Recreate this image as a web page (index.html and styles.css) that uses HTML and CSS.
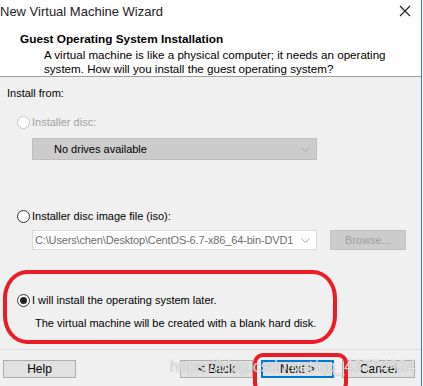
FILE: index.html
```html
<!DOCTYPE html>
<html lang="en">
<head>
    <meta charset="UTF-8">
    <title>New Virtual Machine Wizard</title>
    <link rel="stylesheet" href="styles.css">
</head>
<body>
    <div class="window">
        <!-- Title bar -->
        <div class="titlebar">
            <span class="title">New Virtual Machine Wizard</span>
            <svg class="close" width="12" height="12" viewBox="0 0 12 12">
                <path d="M1 1 L11 11 M11 1 L1 11" stroke="#222" stroke-width="1.1" fill="none"/>
            </svg>
        </div>

        <!-- Header -->
        <div class="header">
            <h2>Guest Operating System Installation</h2>
            <p>A virtual machine is like a physical computer; it needs an operating<br>system. How will you install the guest operating system?</p>
        </div>

        <!-- Options -->
        <div class="content">
            <div class="label">Install from:</div>

            <div class="option disabled opt-disc">
                <span class="radio"></span>
                <span>Installer disc:</span>
            </div>
            <div class="combo combo-disabled">
                <span class="combo-text">No drives available</span>
                <svg class="chevron" width="9" height="5" viewBox="0 0 9 5"><path d="M0.5 0.5 L4.5 4.5 L8.5 0.5" stroke="#a8a8a8" fill="none"/></svg>
            </div>

            <div class="option opt-iso">
                <span class="radio"></span>
                <span>Installer disc image file (iso):</span>
            </div>
            <div class="iso-row">
                <div class="combo combo-iso">
                    <span class="combo-text">C:\Users\chen\Desktop\CentOS-6.7-x86_64-bin-DVD1</span>
                    <svg class="chevron" width="9" height="5" viewBox="0 0 9 5"><path d="M0.5 0.5 L4.5 4.5 L8.5 0.5" stroke="#a8a8a8" fill="none"/></svg>
                </div>
                <div class="browse">Browse...</div>
            </div>

            <div class="option opt-later">
                <span class="radio checked"></span>
                <span>I will install the operating system later.</span>
            </div>
            <div class="note">The virtual machine will be created with a blank hard disk.</div>
        </div>

        <!-- Buttons -->
        <div class="footer">
            <div class="btn">Help</div>
            <div class="btn-group">
                <div class="btn">&lt; Back</div>
                <div class="btn btn-default">Next &gt;</div>
                <div class="btn">Cancel</div>
            </div>
        </div>
    </div>

    <!-- Screenshot annotations -->
    <div class="mark mark-option"></div>
    <div class="mark mark-next"></div>
    <div class="watermark">https://blog.csdn.net/qq_43774924</div>
</body>
</html>
```

FILE: styles.css
```css
/* General Styles */
body {
    margin: 0;
    width: 423px;
    height: 386px;
    overflow: hidden;
    position: relative;
    background: #ffffff;
    font-family: "Liberation Sans", Arial, sans-serif;
    font-size: 11px;
    color: #000;
}

.window {
    width: 421px;
    height: 386px;
    border-right: 1px solid #1c7fd8;
    background: #f0f0f0;
}

/* Title bar */
.titlebar {
    height: 24px;
    background: #ffffff;
    display: flex;
    align-items: center;
    justify-content: space-between;
}

.title {
    font-size: 13px;
    color: #222;
    margin-top: -2px;
}

.close {
    margin-right: 10px;
    margin-top: -2px;
}

/* Header */
.header {
    height: 52px;
    background: #ffffff;
    border-bottom: 1px solid #a0a0a0;
}

.header h2 {
    margin: 0;
    padding: 8px 0 0 20px;
    font-size: 11.8px;
    font-weight: bold;
    line-height: 14px;
}

.header p {
    margin: 2px 0 0 44px;
    font-size: 11.6px;
    line-height: 14px;
}

/* Content */
.content {
    height: 273px;
    border-bottom: 1px solid #dcdcdc;
    padding-left: 7px;
    box-sizing: border-box;
    padding-top: 10px;
}

.label {
    line-height: 13px;
}

.option {
    display: flex;
    align-items: center;
    gap: 2px;
    margin-left: 10px;
    height: 14px;
}

.option.disabled {
    color: #a0a0a0;
}

.opt-disc {
    margin-top: 15px;
}

.opt-iso {
    margin-top: 49px;
}

.opt-later {
    margin-top: 43px;
}

.radio {
    width: 11px;
    height: 11px;
    border: 1px solid #333;
    border-radius: 50%;
    background: #fff;
    display: inline-block;
    position: relative;
}

.disabled .radio {
    border-color: #c4c4c4;
}

.radio.checked::after {
    content: "";
    position: absolute;
    left: 2px;
    top: 2px;
    width: 7px;
    height: 7px;
    border-radius: 50%;
    background: #222;
}

/* Combos */
.combo {
    width: 285px;
    box-sizing: border-box;
    display: flex;
    align-items: center;
    justify-content: space-between;
    padding-right: 6px;
}

.combo-disabled {
    margin: 9px 0 0 25px;
    height: 22px;
    background: #cccccc;
    border: 1px solid #bfbfbf;
    padding-left: 21px;
}

.iso-row {
    display: flex;
    gap: 13px;
    margin: 7px 0 0 25px;
}

.combo-iso {
    height: 20px;
    background: #ffffff;
    border: 1px solid #d9d9d9;
    padding-left: 2px;
    color: #6d6d6d;
}

.combo-iso .combo-text {
    white-space: nowrap;
    overflow: hidden;
    letter-spacing: -0.15px;
}

.chevron {
    flex: none;
    margin-left: 6px;
}

.browse {
    width: 76px;
    height: 20px;
    box-sizing: border-box;
    background: #cccccc;
    border: 1px solid #bfbfbf;
    color: #a0a0a0;
    display: flex;
    align-items: center;
    justify-content: center;
}

.note {
    margin: 9px 0 0 28px;
    line-height: 14px;
}

/* Footer buttons */
.footer {
    display: flex;
    justify-content: space-between;
    padding: 10px 6px 0 3px;
}

.btn-group {
    display: flex;
    gap: 8px;
}

.btn {
    width: 73px;
    height: 18px;
    box-sizing: border-box;
    background: #e1e1e1;
    border: 1px solid #adadad;
    display: flex;
    align-items: center;
    justify-content: center;
    font-size: 12px;
}

.btn-default {
    border: 2px solid #0078d7;
}

/* Annotations drawn over the screenshot */
.mark {
    position: absolute;
    border: 4px solid #ed1c24;
    box-sizing: border-box;
}

.mark-option {
    left: 3px;
    top: 270px;
    width: 334px;
    height: 74px;
    border-radius: 24px / 28px;
}

.mark-next {
    left: 253px;
    top: 353px;
    width: 95px;
    height: 40px;
    border-radius: 10px;
}

.watermark {
    position: absolute;
    left: 170px;
    top: 358px;
    font-size: 16px;
    color: rgba(255, 255, 255, 0.8);
    text-shadow: 0 0 1px rgba(90, 90, 90, 0.7);
    white-space: nowrap;
}
```
